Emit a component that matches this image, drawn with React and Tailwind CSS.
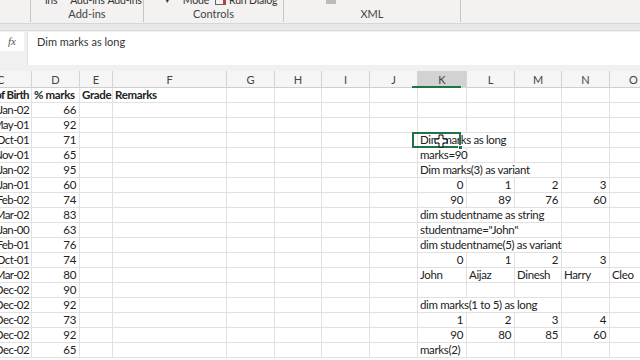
import React from "react";

const GRID = "grid grid-cols-[32px_48px_33px_114px_48px_47px_48px_48px_49px_48px_47px_48px_48px]";
const SPAN = { 1: "", 2: "col-span-2", 3: "col-span-3" };

const left = ["Jan-02", "May-01", "Oct-01", "Nov-01", "Jan-02", "Jan-01", "Feb-02", "Mar-02", "Jan-00", "Feb-01", "Oct-01", "Mar-02", "Dec-02", "Dec-02", "Dec-02", "Dec-02", "Dec-02"];
const marks = [66, 92, 71, 65, 95, 60, 74, 83, 63, 76, 74, 80, 90, 92, 73, 92, 65];

// right side cells, keyed by column index (8 = K)
const txt = (t, span = 1) => ({ text: t, span });
const num = (t) => ({ text: t, span: 1, right: true });
const extra = {
  2: { 8: { ...txt("Dim marks as long", 2), selected: true } },
  3: { 8: txt("marks=90") },
  4: { 8: txt("Dim marks(3) as variant", 3) },
  5: { 8: num("0"), 9: num("1"), 10: num("2"), 11: num("3") },
  6: { 8: num("90"), 9: num("89"), 10: num("76"), 11: num("60") },
  7: { 8: txt("dim studentname as string", 3) },
  8: { 8: txt('studentname="John"', 3) },
  9: { 8: txt("dim studentname(5) as variant", 3) },
  10: { 8: num("0"), 9: num("1"), 10: num("2"), 11: num("3") },
  11: { 8: txt("John"), 9: txt("Aijaz"), 10: txt("Dinesh"), 11: txt("Harry"), 12: txt("Cleo") },
  13: { 8: txt("dim marks(1 to 5) as long", 3) },
  14: { 8: num("1"), 9: num("2"), 10: num("3"), 11: num("4") },
  15: { 8: num("90"), 9: num("80"), 10: num("85"), 11: num("60") },
  16: { 8: txt("marks(2)") },
};

const cellBase = "relative h-[15px] border-r border-b border-[#e1e1e1] leading-[14px] whitespace-nowrap text-[11.5px] text-[#222]";

function Row({ cells }) {
  const out = [];
  let c = 0;
  while (c < 13) {
    const cell = cells[c];
    if (cell) {
      const align = cell.right
        ? c === 0
          ? "flex justify-end pr-[2px] overflow-hidden tracking-[-0.6px]"
          : "flex justify-end pr-[3px] tracking-[-0.35px]"
        : "pl-[2px] tracking-[-0.35px]";
      out.push(
        <div key={c} className={`${cellBase} ${SPAN[cell.span]} ${align} ${cell.bold ? "font-bold" : ""}`}>
          {cell.text}
          {cell.selected && (
            <>
              <div className="absolute -left-[6px] -top-[1px] w-[49px] h-[16px] border-2 border-[#217346]" />
              <div className="absolute left-[40px] top-[12px] w-[5px] h-[5px] bg-[#217346] border border-white" />
              <svg className="absolute left-[16px] top-[1px]" width="14" height="14" viewBox="0 0 14 14">
                <path d="M5 1h4v4h4v4H9v4H5V9H1V5h4z" fill="#fff" stroke="#000" strokeWidth="1" />
              </svg>
            </>
          )}
        </div>
      );
      c += cell.span;
    } else {
      out.push(<div key={c} className={cellBase} />);
      c += 1;
    }
  }
  return <div className={GRID}>{out}</div>;
}

function Group({ width, label, children, last, pad = "" }) {
  return (
    <div className={`${width} shrink-0 h-[22px] flex flex-col ${last ? "" : "border-r border-[#c8c6c4]"}`}>
      <div className="h-[7px] overflow-hidden">
        <div className={`-mt-[7px] h-[14px] flex items-center gap-[3px] whitespace-nowrap text-[10.5px] tracking-[-0.2px] leading-[14px] text-[#333] ${pad}`}>{children}</div>
      </div>
      <div className="flex-1 text-center text-[11px] leading-[14px] text-[#444]">{label}</div>
    </div>
  );
}

export default function App() {
  const header = { 0: { text: "Date of Birth", span: 1, right: true, bold: true }, 1: { text: "% marks", span: 1, bold: true }, 2: { text: "Grade", span: 1, bold: true }, 3: { text: "Remarks", span: 1, bold: true } };
  const cols = ["C", "D", "E", "F", "G", "H", "I", "J", "K", "L", "M", "N", "O"];
  return (
    <div className="w-[640px] h-[360px] overflow-hidden bg-white font-['Lato',sans-serif]">
      {/* ribbon */}
      <div className="h-[24px] bg-[#f3f2f1] flex border-b border-[#d6d6d6]">
        <Group width="w-[31px]" label="" />
        <Group width="w-[113px]" label="Add-ins" pad="pl-[14px]">
          <span className="shrink-0 mr-[10px]">ins</span>
          <span className="shrink-0">Add-ins</span>
          <span className="shrink-0">Add-ins</span>
        </Group>
        <Group width="w-[140px]" label="Controls" pad="pl-[21px]">
          <span className="shrink-0 text-[9px] mr-[10px]">▾</span>
          <span className="shrink-0 mr-[3px]">Mode</span>
          <span className="shrink-0 w-[11px] h-[9px] border border-[#666] flex justify-end items-end">
            <span className="w-[2px] h-[6px] bg-[#d13438]" />
          </span>
          <span className="shrink-0">Run Dialog</span>
        </Group>
        <Group width="w-[177px]" label="XML" pad="pl-[42px]">
          <span className="shrink-0 w-[10px] h-[8px] bg-[#bbb]" />
        </Group>
        <Group width="flex-1" label="" last />
      </div>
      <div className="h-[7px] bg-[#e8e8e8] border-b border-[#dcdcdc]" />
      {/* formula bar */}
      <div className="h-[40px] bg-[#f0f0f0] flex items-start pt-[1px] gap-[3px]">
        <div className="w-[24px] h-[19px] bg-white flex items-center justify-center text-[11px] italic text-[#555] font-['Liberation_Serif',serif]">fx</div>
        <div className="flex-1 h-[33px] bg-white border-l border-[#e0e0e0] pl-[9px] pt-[2px] text-[11px] text-[#333]">Dim marks as long</div>
      </div>
      {/* column headers */}
      <div className={`${GRID} h-[17px] bg-[#f5f5f5] border-b border-[#cfcfcf]`}>
        {cols.map((c, i) => (
          <div key={c} className={`relative h-[17px] border-r border-[#d4d4d4] text-[11px] leading-[17px] text-[#444] ${i === 0 ? "text-left -indent-[3px]" : "text-center"} ${c === "K" ? "bg-[#d2d2d2]" : ""}`}>
            {c}
            {c === "K" && <div className="absolute -left-[6px] bottom-0 w-[49px] h-[2px] bg-[#217346]" />}
          </div>
        ))}
      </div>
      <Row cells={header} />
      {left.map((d, i) => (
        <Row key={i} cells={{ 0: { text: d, span: 1, right: true }, 1: { text: String(marks[i]), span: 1, right: true }, ...(extra[i] || {}) }} />
      ))}
    </div>
  );
}
